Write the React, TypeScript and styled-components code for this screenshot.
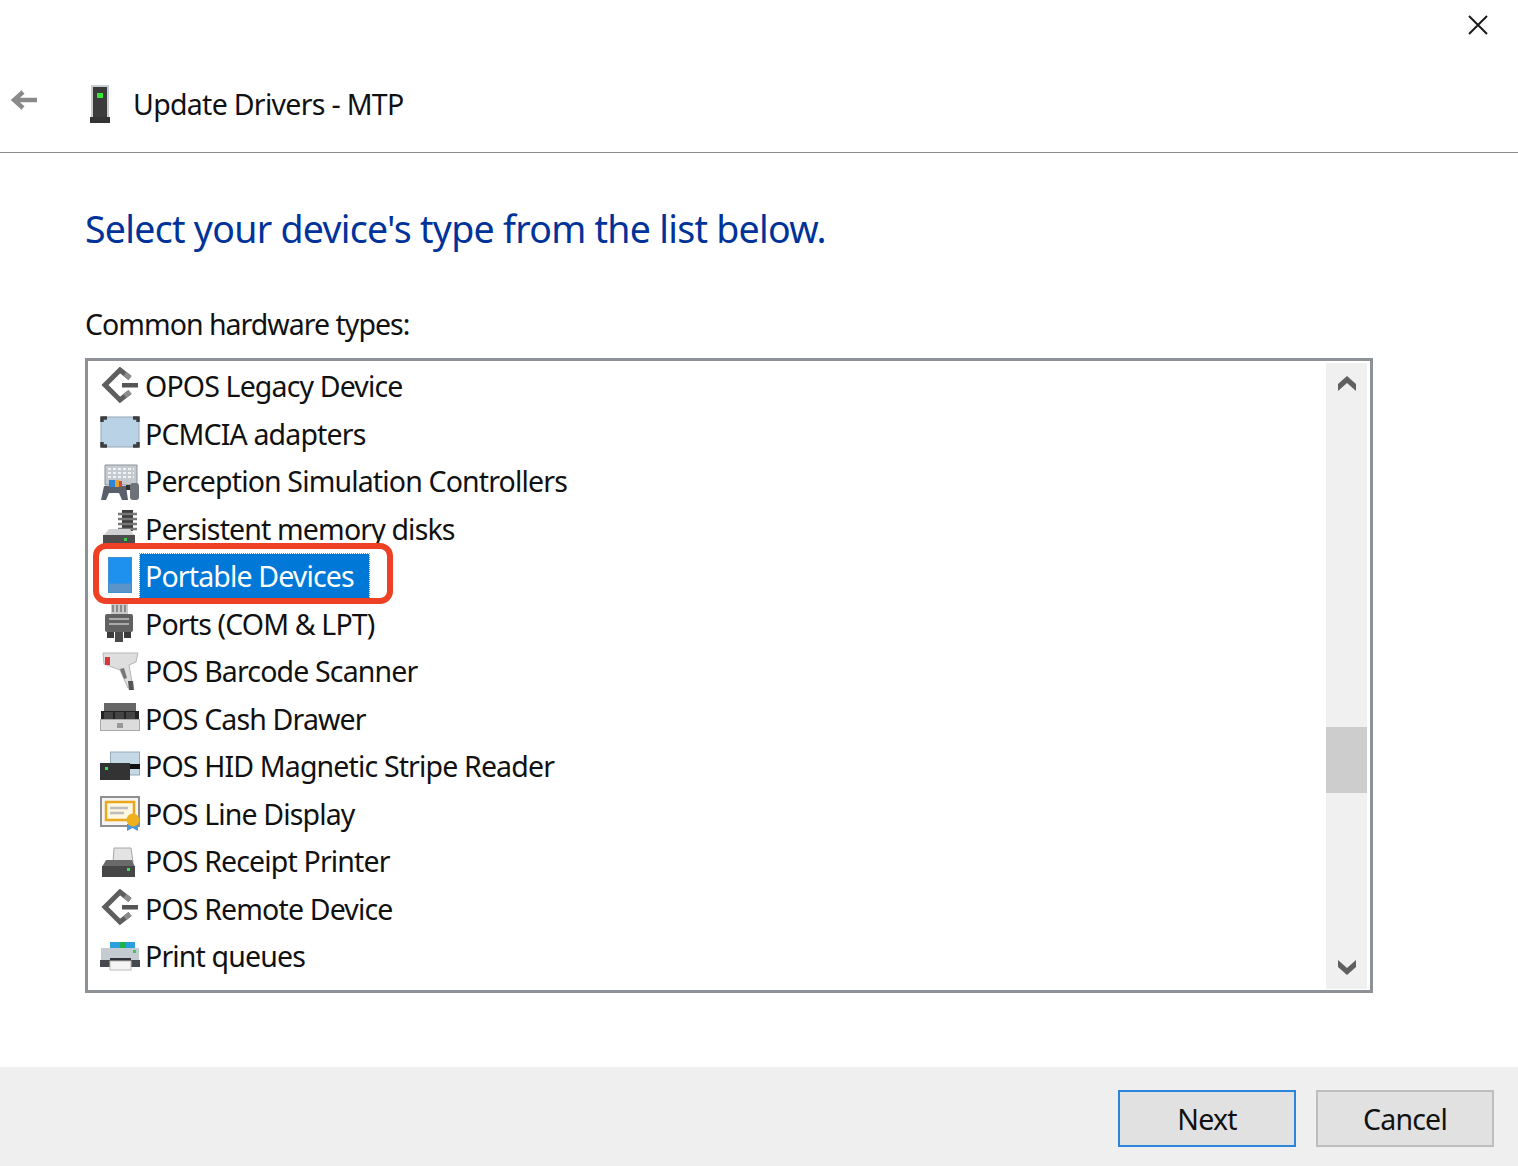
import React from 'react';
import styled, {createGlobalStyle} from 'styled-components';

const GlobalStyle = createGlobalStyle`
	html, body {
		margin: 0;
		padding: 0;
		background: #fff;
	}
	* {
		box-sizing: border-box;
	}
`;

const fontStack = `'Noto Sans', 'Open Sans', sans-serif`;

const Page = styled.div`
	width: 1518px;
	height: 1166px;
	display: flex;
	flex-direction: column;
	font-family: ${fontStack};
	color: #111;
	overflow: hidden;
	background: #fff;
`;

const TopBar = styled.div`
	height: 50px;
	display: flex;
	justify-content: flex-end;
	align-items: center;
	padding-right: 29px;
`;

const Header = styled.div`
	height: 103px;
	display: flex;
	align-items: center;
	border-bottom: 1px solid #8c8c8c;
	padding-top: 5px;
`;

const BackButton = styled.div`
	width: 89px;
	padding-left: 11px;
	display: flex;
	margin-top: -8px;
`;

const DeviceIcon = styled.div`
	width: 44px;
	height: 38px;
	display: flex;
	filter: blur(0.4px);
`;

const Title = styled.div`
	font-size: 28.5px;
	letter-spacing: -0.7px;
	line-height: 40px;
`;

const Main = styled.div`
	padding: 49px 0 0 85px;
	flex: 1;
`;

const Heading = styled.h1`
	margin: 0;
	font-size: 37.5px;
	font-weight: 400;
	line-height: 54px;
	letter-spacing: -0.72px;
	color: #003399;
`;

const FieldLabel = styled.div`
	margin-top: 48px;
	font-size: 28.5px;
	line-height: 40px;
	letter-spacing: -0.98px;
`;

const ListBox = styled.div`
	margin-top: 14px;
	width: 1288px;
	height: 635px;
	border: 3px solid #8e9196;
	display: flex;
	background: #fff;
`;

const Rows = styled.div`
	flex: 1;
	padding: 2px 0 0 12px;
`;

const Row = styled.div<{$selected?: boolean}>`
	position: relative;
	height: 47.5px;
	display: flex;
	align-items: center;
	font-size: 28.5px;
	letter-spacing: -0.85px;
	white-space: nowrap;
	z-index: ${({$selected}) => ($selected ? 1 : 0)};
`;

const RowIcon = styled.div`
	width: 40px;
	height: 40px;
	flex: none;
	display: flex;
	filter: blur(0.4px);
`;

const RowText = styled.span<{$selected?: boolean}>`
	display: block;
	height: 45px;
	line-height: 44px;
	padding: 0 15px 0 5px;
	color: ${({$selected}) => ($selected ? '#fff' : '#111')};
	background: ${({$selected}) => ($selected ? '#0078d7' : 'transparent')};
	outline: ${({$selected}) => ($selected ? '1px dotted #7f8f9f' : 'none')};
`;

const Callout = styled.div`
	position: absolute;
	left: -7px;
	top: -10px;
	width: 300px;
	height: 61px;
	border: 6px solid #ee4024;
	border-radius: 13px;
	pointer-events: none;
`;

const ScrollBar = styled.div`
	width: 41px;
	margin: 2px 3px 1px 0;
	background: #f0f0f0;
	display: flex;
	flex-direction: column;
	align-items: center;
`;

const ScrollArrow = styled.div<{$down?: boolean}>`
	height: 40px;
	display: flex;
	align-items: center;
	justify-content: center;
	padding-bottom: ${({$down}) => ($down ? '4px' : '0')};
`;

const ScrollTrack = styled.div`
	flex: 1;
	width: 100%;
	display: flex;
	flex-direction: column;
	justify-content: flex-end;
	padding-bottom: 156px;
`;

const ScrollThumb = styled.div`
	height: 66px;
	background: #cdcdcd;
`;

const Footer = styled.div`
	height: 99px;
	background: #efefef;
	display: flex;
	justify-content: flex-end;
	align-items: flex-start;
	gap: 20px;
	padding: 23px 24px 0 0;
`;

const Button = styled.div<{$primary?: boolean}>`
	width: 178px;
	height: 57px;
	display: flex;
	align-items: center;
	justify-content: center;
	background: #e1e1e1;
	border: 2px solid ${({$primary}) => ($primary ? '#2a86da' : '#bdbdbd')};
	font-size: 28.5px;
	letter-spacing: -0.8px;
	color: #111;
`;

const Svg: React.FC<{children: React.ReactNode}> = ({children}) => (
	<svg width="40" height="40" viewBox="0 0 40 40">
		{children}
	</svg>
);

const CloseIcon = () => (
	<svg width="22" height="22" viewBox="0 0 22 22">
		<path d="M2 2 L20 20 M20 2 L2 20" stroke="#1a1a1a" strokeWidth="2" fill="none" />
	</svg>
);

const BackArrow = () => (
	<svg width="27" height="22" viewBox="0 0 27 22">
		<path d="M12 3 L3 11 L12 19 M3 11 H26" stroke="#8a8a8a" strokeWidth="4.5" fill="none" />
	</svg>
);

const TowerIcon = () => (
	<svg width="24" height="38" viewBox="0 0 24 38">
		<rect x="2" y="0" width="18" height="33" fill="#c9ced3" />
		<rect x="4" y="2" width="14" height="30" fill="#3b3b3b" />
		<rect x="8" y="8" width="6" height="5" fill="#37e637" />
		<rect x="1" y="32" width="20" height="6" fill="#333" />
	</svg>
);

const RemoteIcon = () => (
	<Svg>
		<path d="M30 11 L20 3 L5 18 L20 33 L30 25" stroke="#5e5e5e" strokeWidth="5" fill="none" />
		<path d="M25 7 L30 11 M25 29 L30 25" stroke="#8c8c8c" strokeWidth="5" fill="none" />
		<rect x="22" y="16" width="16" height="4.5" fill="#555" />
	</Svg>
);

const PcmciaIcon = () => (
	<Svg>
		<rect x="1" y="3" width="38" height="30" rx="2" fill="#b9d2e6" stroke="#93a5b4" />
		<path d="M2 8 V4 H7 M33 4 H38 V8 M2 28 V32 H7 M33 32 H38 V28" stroke="#3e3e3e" strokeWidth="3.5" fill="none" />
	</Svg>
);

const PerceptionIcon = () => (
	<Svg>
		<path d="M5 3 H37 V23 H5 Z" fill="#c5cad0" stroke="#8d9299" />
		<path d="M8 7 H34 M8 11 H34 M8 15 H34" stroke="#f0f2f4" strokeWidth="2" strokeDasharray="3 2" />
		<path d="M1 38 L4 24 H26 L28 38 H22 L19 31 H9 L6 38 Z" fill="#59606b" />
		<rect x="9" y="18" width="6" height="7" fill="#2c84d8" />
		<rect x="15" y="18" width="4" height="7" fill="#e8a030" />
		<rect x="19" y="19" width="3" height="6" fill="#d04a3a" />
		<rect x="26" y="23" width="6" height="5" fill="#333" />
		<rect x="30" y="21" width="9" height="17" rx="3" fill="#6c7278" />
	</Svg>
);

const MemoryIcon = () => (
	<Svg>
		<rect x="22" y="1" width="11" height="21" fill="#3d3d3d" />
		<path d="M18 5 H37 M18 10 H37 M18 15 H37 M18 20 H37" stroke="#777" strokeWidth="2.5" />
		<path d="M4 26 L9 20 H30 L34 26 Z" fill="#cfd1d3" />
		<rect x="3" y="26" width="32" height="12" fill="#4d4d4d" />
		<rect x="24" y="29" width="3" height="3" fill="#35d04a" />
	</Svg>
);

const PortableIcon = () => (
	<Svg>
		<rect x="8" y="0" width="24" height="36" fill="#3f8fd6" />
		<rect x="9" y="1" width="22" height="25" fill="#1e90ee" />
		<rect x="9" y="27" width="22" height="8" fill="#5b94c8" />
	</Svg>
);

const PortIcon = () => (
	<Svg>
		<rect x="11" y="0" width="17" height="11" fill="#c9c9c9" />
		<path d="M13 1 V8 M17 1 V8 M21 1 V8 M25 1 V8" stroke="#777" strokeWidth="1.5" />
		<rect x="5" y="10" width="28" height="18" rx="2" fill="#616161" />
		<path d="M9 15 H29 M9 20 H29" stroke="#aaa" strokeWidth="2" />
		<rect x="7" y="28" width="7" height="6" fill="#3a3a3a" />
		<rect x="24" y="28" width="7" height="6" fill="#3a3a3a" />
		<rect x="15" y="28" width="8" height="10" fill="#4a4a4a" />
	</Svg>
);

const BarcodeIcon = () => (
	<Svg>
		<path d="M3 1 H38 L36 10 L29 13 L33 36 H28 L20 18 L4 12 Z" fill="#dedede" stroke="#b5b5b5" />
		<rect x="5" y="5" width="5" height="8" fill="#d9363e" />
		<path d="M20 17 L24 27 L27 26 L24 16 Z" fill="#777" />
		<path d="M28 29 H33 L34 38 H29 Z" fill="#555" />
	</Svg>
);

const DrawerIcon = () => (
	<Svg>
		<rect x="4" y="4" width="32" height="9" fill="#666" />
		<rect x="1" y="12" width="38" height="9" fill="#222" />
		<rect x="4" y="13" width="9" height="7" fill="#444" />
		<rect x="15" y="13" width="9" height="7" fill="#444" />
		<rect x="26" y="13" width="9" height="7" fill="#444" />
		<rect x="0.5" y="20.5" width="39" height="11" fill="#dcdcdc" stroke="#a8a8a8" />
		<rect x="17" y="24" width="6" height="5" fill="#999" />
	</Svg>
);

const ReaderIcon = () => (
	<Svg>
		<rect x="10.5" y="5" width="29" height="23" fill="#c4d8e6" stroke="#97a9b5" />
		<rect x="30" y="17" width="10" height="5" fill="#111" />
		<rect x="0" y="16" width="30" height="17" fill="#333" />
		<rect x="5" y="20" width="3" height="3" fill="#39e05a" />
	</Svg>
);

const DisplayIcon = () => (
	<Svg>
		<rect x="1" y="3" width="38" height="29" fill="#f4f4f4" stroke="#8f8f8f" strokeWidth="2" />
		<rect x="6" y="8" width="28" height="18" fill="#fff8e0" stroke="#eaa81d" strokeWidth="2.5" />
		<path d="M10 14 H28 M10 19 H24" stroke="#bdbdbd" strokeWidth="2.5" />
		<path d="M27 30 H38 V37 L32.5 34 L27 37 Z" fill="#4a97dd" />
		<circle cx="33" cy="26" r="6.5" fill="#eeb01c" />
	</Svg>
);

const PrinterIcon = () => (
	<Svg>
		<path d="M14 6 H31 L33 20 H13 Z" fill="#e3e3e3" stroke="#a5a5a5" />
		<path d="M2 25 L6 18 H32 L35 25 Z" fill="#6a6a6a" />
		<rect x="2" y="24" width="33" height="11" fill="#464646" />
		<rect x="27" y="26" width="3" height="3" fill="#3bdd5a" />
	</Svg>
);

const QueueIcon = () => (
	<Svg>
		<rect x="10" y="5" width="25" height="8" fill="#28a0e0" />
		<rect x="20" y="5" width="6" height="8" fill="#22b04a" />
		<path d="M1 11 H39 V30 H1 Z" fill="#c4cbd1" />
		<rect x="0" y="23" width="40" height="7" fill="#45494d" />
		<rect x="10" y="21" width="21" height="4" fill="#30343a" />
		<rect x="10" y="24" width="21" height="9" fill="#f4f4f4" stroke="#bbb" />
		<rect x="33" y="13" width="3" height="3" fill="#35cf4c" />
	</Svg>
);

type Device = {
	name: string;
	Icon: React.FC;
	selected?: boolean;
};

const devices: Device[] = [
	{name: 'OPOS Legacy Device', Icon: RemoteIcon},
	{name: 'PCMCIA adapters', Icon: PcmciaIcon},
	{name: 'Perception Simulation Controllers', Icon: PerceptionIcon},
	{name: 'Persistent memory disks', Icon: MemoryIcon},
	{name: 'Portable Devices', Icon: PortableIcon, selected: true},
	{name: 'Ports (COM & LPT)', Icon: PortIcon},
	{name: 'POS Barcode Scanner', Icon: BarcodeIcon},
	{name: 'POS Cash Drawer', Icon: DrawerIcon},
	{name: 'POS HID Magnetic Stripe Reader', Icon: ReaderIcon},
	{name: 'POS Line Display', Icon: DisplayIcon},
	{name: 'POS Receipt Printer', Icon: PrinterIcon},
	{name: 'POS Remote Device', Icon: RemoteIcon},
	{name: 'Print queues', Icon: QueueIcon},
];

const ChevronUp = () => (
	<svg width="20" height="17" viewBox="0 0 20 17">
		<path d="M1 16 V9 L10 1 L19 9 V16 L10 8 Z" fill="#606060" />
	</svg>
);

const ChevronDown = () => (
	<svg width="20" height="17" viewBox="0 0 20 17">
		<path d="M1 1 V8 L10 16 L19 8 V1 L10 9 Z" fill="#606060" />
	</svg>
);

export default function App() {
	return (
		<Page>
			<GlobalStyle />
			<TopBar>
				<CloseIcon />
			</TopBar>
			<Header>
				<BackButton>
					<BackArrow />
				</BackButton>
				<DeviceIcon>
					<TowerIcon />
				</DeviceIcon>
				<Title>Update Drivers - MTP</Title>
			</Header>
			<Main>
				<Heading>Select your device's type from the list below.</Heading>
				<FieldLabel>Common hardware types:</FieldLabel>
				<ListBox>
					<Rows>
						{devices.map(({name, Icon, selected}) => (
							<Row key={name} $selected={selected}>
								<RowIcon>
									<Icon />
								</RowIcon>
								<RowText $selected={selected}>{name}</RowText>
								{selected ? <Callout /> : null}
							</Row>
						))}
					</Rows>
					<ScrollBar>
						<ScrollArrow>
							<ChevronUp />
						</ScrollArrow>
						<ScrollTrack>
							<ScrollThumb />
						</ScrollTrack>
						<ScrollArrow $down>
							<ChevronDown />
						</ScrollArrow>
					</ScrollBar>
				</ListBox>
			</Main>
			<Footer>
				<Button $primary>Next</Button>
				<Button>Cancel</Button>
			</Footer>
		</Page>
	);
}
